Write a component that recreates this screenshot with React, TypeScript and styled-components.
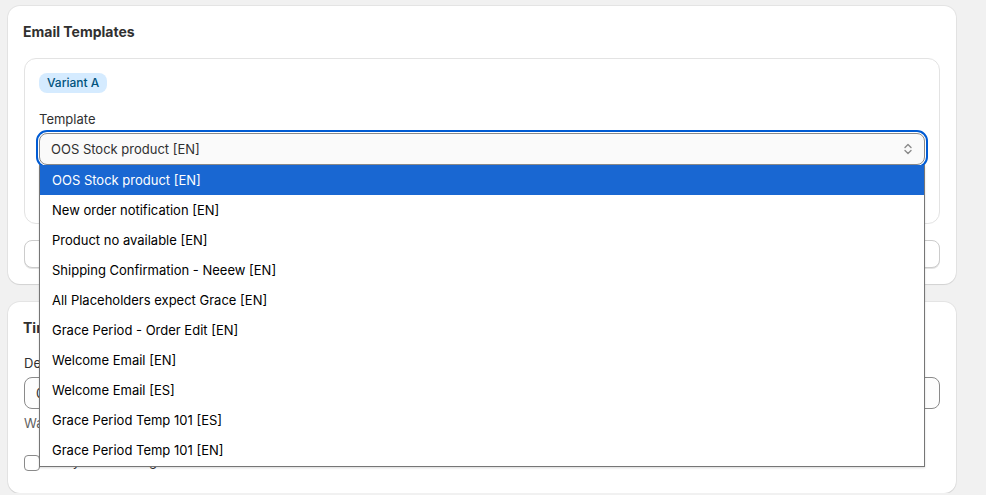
import React from 'react';
import styled, { createGlobalStyle } from 'styled-components';

const GlobalStyle = createGlobalStyle`
  body {
    margin: 0;
    background: #f1f1f1;
    font-family: Inter, 'Noto Sans', 'Liberation Sans', sans-serif;
    color: #303030;
    -webkit-font-smoothing: antialiased;
  }
`;

const Page = styled.div`
  width: 948px;
  padding: 6px 0 0 8px;
  display: flex;
  flex-direction: column;
  gap: 18px;
`;

const Card = styled.section<{ $bottom?: number }>`
  background: #ffffff;
  border-radius: 12px;
  padding: 16px 16px ${p => p.$bottom ?? 16}px;
  box-shadow: 0 0 0 1px rgba(0, 0, 0, 0.05), 0 1px 1px rgba(0, 0, 0, 0.08);
  display: flex;
  flex-direction: column;
`;

const CardTitle = styled.h2`
  margin: 0 0 0 -1px;
  font-size: 14px;
  line-height: 20px;
  font-weight: 650;
  color: #303030;
`;

const VariantBox = styled.div`
  margin-top: 16px;
  border: 1px solid #e3e3e3;
  border-radius: 12px;
  padding: 14px 14px 15px;
  display: flex;
  flex-direction: column;
`;

const Badge = styled.span`
  align-self: flex-start;
  background: #d5ebff;
  color: #00527c;
  font-size: 12px;
  line-height: 20px;
  font-weight: 450;
  padding: 0 8px;
  border-radius: 8px;
`;

const Label = styled.label<{ $top?: number }>`
  display: block;
  margin-top: ${p => p.$top ?? 0}px;
  font-size: 13px;
  line-height: 20px;
  color: #303030;
`;

const SelectWrap = styled.div`
  position: relative;
  margin-top: 4px;
  z-index: 5;
`;

const SelectBox = styled.div`
  height: 32px;
  box-sizing: border-box;
  border: 1px solid #8a8a8a;
  border-radius: 8px;
  background: #fafafa;
  outline: 2px solid #005bd3;
  outline-offset: 1px;
  display: flex;
  align-items: center;
  justify-content: space-between;
  padding: 0 10px 0 11px;
  font-size: 13px;
  color: #303030;
`;

const ListBox = styled.ul`
  position: absolute;
  top: 100%;
  left: 0;
  width: calc(100% - 2px);
  margin: 0;
  padding: 0 0 1px;
  list-style: none;
  background: #ffffff;
  border: 1px solid #767676;
  border-top: none;
  box-shadow: 0 1px 2px rgba(0, 0, 0, 0.15);
`;

const Option = styled.li<{ $active?: boolean }>`
  height: 30px;
  display: flex;
  align-items: center;
  padding-left: 12px;
  font-size: 13px;
  color: ${p => (p.$active ? '#ffffff' : '#000000')};
  background: ${p => (p.$active ? '#1967d2' : 'transparent')};
`;

const PreviewRow = styled.div`
  margin-top: 15px;
  height: 28px;
  display: flex;
  align-items: center;
  gap: 8px;
  font-size: 13px;
  color: #616161;
`;

const WideButton = styled.button`
  margin-top: 16px;
  height: 28px;
  border: 1px solid #cccccc;
  border-radius: 8px;
  background: #ffffff;
  box-shadow: 0 1px 0 #e3e3e3;
  font-family: inherit;
  font-size: 13px;
  font-weight: 550;
  color: #303030;
`;

const TextInput = styled.div`
  margin-top: 4px;
  height: 32px;
  box-sizing: border-box;
  border: 1px solid #8a8a8a;
  border-radius: 8px;
  background: #fdfdfd;
  display: flex;
  align-items: center;
  padding: 0 11px;
  font-size: 13px;
`;

const HelpText = styled.p`
  margin: 4px 0 0;
  font-size: 13px;
  line-height: 20px;
  color: #616161;
`;

const CheckRow = styled.label`
  margin-top: 16px;
  height: 24px;
  display: flex;
  align-items: center;
  gap: 12px;
  font-size: 13px;
  line-height: 16px;
  color: #303030;
`;

const CheckBox = styled.span`
  width: 16px;
  height: 16px;
  margin-top: 3px;
  box-sizing: border-box;
  border: 1px solid #8a8a8a;
  border-radius: 4px;
  background: #ffffff;
`;

const templates = [
  'OOS Stock product [EN]',
  'New order notification [EN]',
  'Product no available [EN]',
  'Shipping Confirmation - Neeew [EN]',
  'All Placeholders expect Grace [EN]',
  'Grace Period - Order Edit [EN]',
  'Welcome Email [EN]',
  'Welcome Email [ES]',
  'Grace Period Temp 101 [ES]',
  'Grace Period Temp 101 [EN]'
];

const SelectIcon = () => (
  <svg width="12" height="16" viewBox="0 0 12 16" fill="none">
    <path d="M3 6.5 6 3.5l3 3" stroke="#8a8a8a" strokeWidth="1.4" strokeLinecap="round" strokeLinejoin="round" />
    <path d="M3 9.5 6 12.5l3-3" stroke="#8a8a8a" strokeWidth="1.4" strokeLinecap="round" strokeLinejoin="round" />
  </svg>
);

export default function App() {
  const selected = templates[0];
  return (
    <>
      <GlobalStyle />
      <Page>
        <Card>
          <CardTitle>Email Templates</CardTitle>
          <VariantBox>
            <Badge>Variant A</Badge>
            <Label $top={16}>Template</Label>
            <SelectWrap>
              <SelectBox>
                <span>{selected}</span>
                <SelectIcon />
              </SelectBox>
              <ListBox>
                {templates.map(t => (
                  <Option key={t} $active={t === selected}>
                    {t}
                  </Option>
                ))}
              </ListBox>
            </SelectWrap>
            <PreviewRow>Preview template</PreviewRow>
          </VariantBox>
          <WideButton>Add variant B</WideButton>
        </Card>
        <Card $bottom={20}>
          <CardTitle>Timing</CardTitle>
          <Label $top={15}>Delay (minutes)</Label>
          <TextInput>0</TextInput>
          <HelpText>Wait time before the email is sent</HelpText>
          <CheckRow>
            <CheckBox />
            Only send during business hours
          </CheckRow>
        </Card>
      </Page>
    </>
  );
}
